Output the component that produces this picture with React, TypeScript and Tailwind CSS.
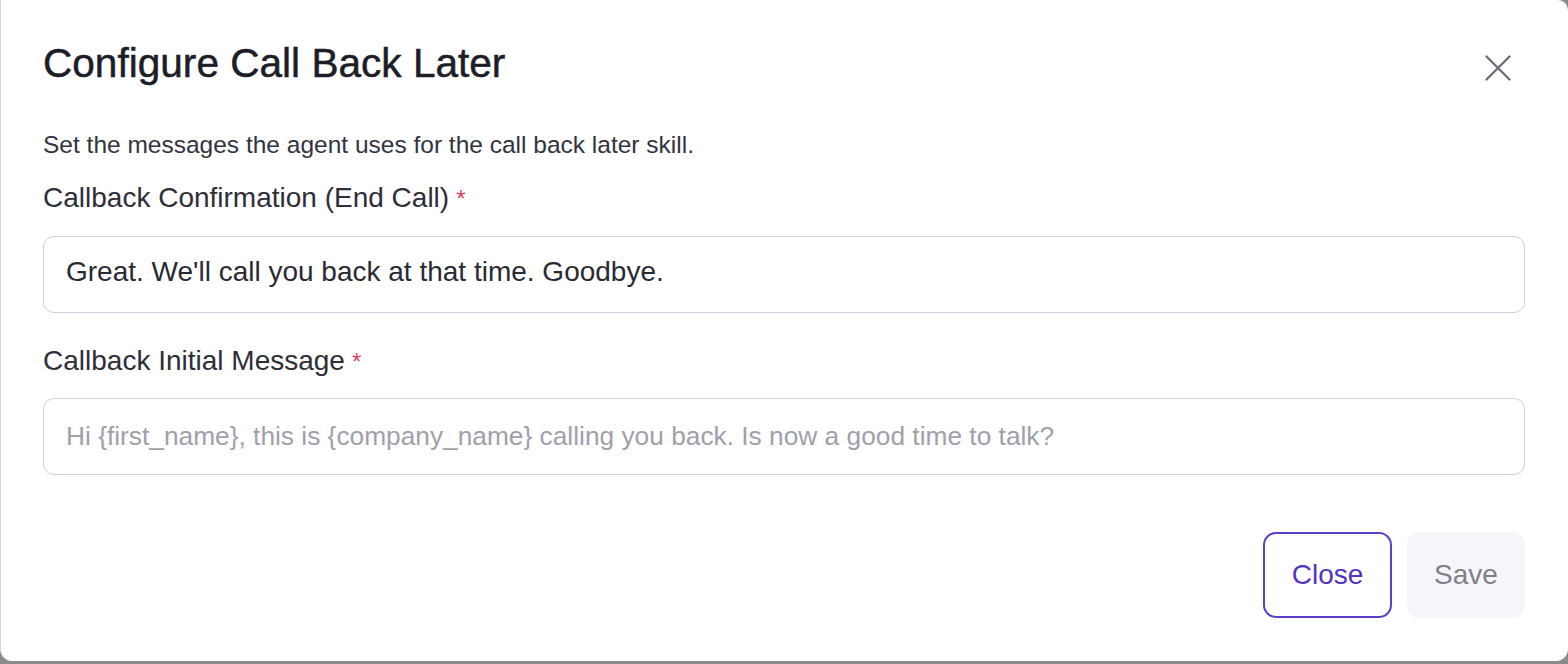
import React from "react";

export default function App() {
  return (
    <div
      className="h-[664px] w-[1568px] overflow-hidden bg-[#8b8b8b]"
      style={{ fontFamily: '"Liberation Sans", Arial, sans-serif' }}
    >
      <div className="flex h-[661px] flex-col rounded-b-[12px] rounded-tr-[10px] border-l border-[#d9d9d9] bg-white pl-[42px] pr-[43px] pt-[40px]">
        <div className="flex items-start justify-between">
          <h1 className="text-[40.6px] leading-[46px] text-[#1d1d28] [-webkit-text-stroke:0.5px_#1d1d28]">
            Configure Call Back Later
          </h1>
          <button className="mr-[14px] mt-[15px] text-[#6e6e7a]" aria-label="Close">
            <svg width="26" height="26" viewBox="0 0 26 26" fill="none" stroke="currentColor" strokeWidth="2.4" strokeLinecap="round">
              <path d="M1.5 1.5 L24.5 24.5 M24.5 1.5 L1.5 24.5" />
            </svg>
          </button>
        </div>
        <p className="mt-[45px] text-[24.5px] leading-[28px] text-[#33333d]">
          Set the messages the agent uses for the call back later skill.
        </p>
        <label className="mt-[23px] text-[28px] leading-[32px] text-[#2e2e38]">
          Callback Confirmation (End Call)
          <span className="ml-[7px] text-[24px] text-[#d6455d]">*</span>
        </label>
        <input
          className="mt-[21px] h-[77px] w-full rounded-[11px] border-[1.5px] border-[#cfcee2] px-[22px] pb-[5px] text-[28px] text-[#2a2a33] outline-none placeholder:text-[#a0a0aa]"
          defaultValue="Great. We'll call you back at that time. Goodbye."
        />
        <label className="mt-[32px] text-[28px] leading-[32px] text-[#2e2e38]">
          Callback Initial Message
          <span className="ml-[7px] text-[24px] text-[#d6455d]">*</span>
        </label>
        <input
          className="mt-[20px] h-[77px] w-full rounded-[11px] border-[1.5px] border-[#cfcee2] px-[22px] text-[26.3px] text-[#2a2a33] outline-none placeholder:text-[#a0a0aa]"
          placeholder="Hi {first_name}, this is {company_name} calling you back. Is now a good time to talk?"
        />
        <div className="mt-[57px] flex justify-end gap-[15px]">
          <button className="h-[86px] w-[129px] rounded-[13px] border-2 border-[#5d3fc8] text-[28px] text-[#5235c0]">
            Close
          </button>
          <button className="h-[86px] w-[118px] rounded-[13px] bg-[#f6f6fa] text-[28px] text-[#80808c]">
            Save
          </button>
        </div>
      </div>
    </div>
  );
}
